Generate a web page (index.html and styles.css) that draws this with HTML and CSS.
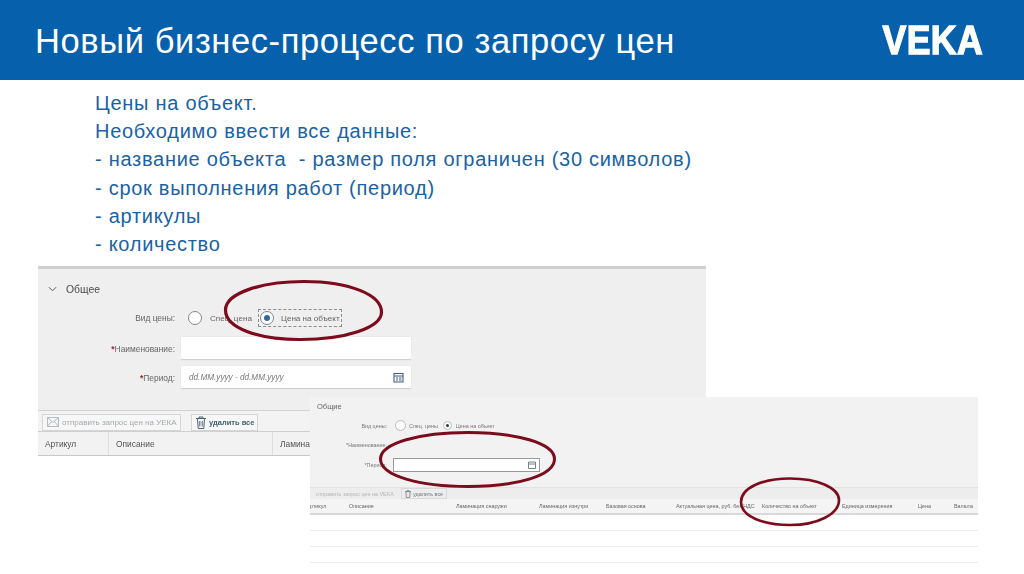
FILE: index.html
```html
<!DOCTYPE html>
<html lang="ru">
<head>
<meta charset="utf-8">
<title>Новый бизнес-процесс по запросу цен</title>
<link rel="stylesheet" href="styles.css">
</head>
<body>
<header class="topbar">
  <h1 class="title">Новый бизнес-процесс по запросу цен</h1>
  <div class="logo">VEKA</div>
</header>
<main class="slide">
  <div class="intro">
    <p>Цены на объект.</p>
    <p>Необходимо ввести все данные:</p>
    <p>- название объекта&nbsp; - размер поля ограничен (30 символов)</p>
    <p>- срок выполнения работ (период)</p>
    <p>- артикулы</p>
    <p>- количество</p>
  </div>

  <section class="shot shot-a">
    <div class="sec-head">
      <svg class="chev" width="9" height="6" viewBox="0 0 10 6"><path d="M1 1l4 4 4-4" fill="none" stroke="#4a5a68" stroke-width="1.1"/></svg>
      <span>Общее</span>
    </div>
    <div class="form">
      <div class="row row-radio">
        <label class="lbl">Вид цены:</label>
        <div class="radios">
          <span class="radio"></span><span class="opt">Спец. цена</span>
          <span class="focus"><span class="radio on"></span><span class="opt">Цена на объект</span></span>
        </div>
      </div>
      <div class="row">
        <label class="lbl"><b>*</b>Наименование:</label>
        <div class="input"></div>
      </div>
      <div class="row">
        <label class="lbl"><b>*</b>Период:</label>
        <div class="input date">
          <i>dd.MM.yyyy - dd.MM.yyyy</i>
          <svg width="11" height="11" viewBox="0 0 11 11"><path d="M1 1.500h9v8.500H1zM1 4h9M3 6h2M6 6h2.500M3 8h2M6 8h2.500" fill="none" stroke="#3f5f80" stroke-width="1.100"/></svg>
        </div>
      </div>
    </div>
    <div class="toolbar">
      <span class="btn off">
        <svg width="12" height="10" viewBox="0 0 12 10"><path d="M.5.5h11v9H.5zM.5.5L6 5.500 11.500.5M.5 9.500L4.500 4.500M11.500 9.500L7.500 4.500" fill="none" stroke="#a9b4bc" stroke-width=".9"/></svg>
        <span>отправить запрос цен на УЕКА</span>
      </span>
      <span class="btn del">
        <svg width="10" height="13" viewBox="0 0 10 13"><path d="M0 2.500h10M3 2.500V1h4v1.500M1.500 2.500l.7 10h5.600l.7-10M3.800 5v5.500M6.200 5v5.500" fill="none" stroke="#4a6378" stroke-width="1"/></svg>
        <span>удалить все</span>
      </span>
    </div>
    <div class="thead">
      <span class="th th-art">Артикул</span>
      <span class="th th-desc">Описание</span>
      <span class="th">Ламина</span>
    </div>
    <div class="tbody"></div>
  </section>

  <section class="shot shot-b">
    <div class="b-head">Общие</div>
    <div class="b-row b-row-radio">
      <span class="b-lbl">Вид цены:</span>
      <span class="b-radio"></span><span class="b-opt">Спец. цены</span>
      <span class="b-radio on"></span><span class="b-opt">Цена на объект</span>
    </div>
    <div class="b-row"><span class="b-lbl">*Наименование:</span></div>
    <div class="b-row">
      <span class="b-lbl">*Период:</span>
      <div class="b-input">
        <svg width="8" height="8" viewBox="0 0 8 8"><path d="M.5 1h7v6.500h-7zM.5 3h7" fill="none" stroke="#77808a"/></svg>
      </div>
    </div>
    <div class="b-toolbar">
      <span class="b-btn off">отправить запрос цен на VEKA</span>
      <span class="b-btn">
        <svg width="6" height="8" viewBox="0 0 10 13"><path d="M0 2.500h10M3 2.500V1h4v1.500M1.500 2.500l.7 10h5.600l.7-10" fill="none" stroke="#6d7680" stroke-width="1.300"/></svg>
        удалить все
      </span>
    </div>
    <div class="b-thead">
      <span>ртикул</span>
      <span>Описание</span>
      <span>Ламинация снаружи</span>
      <span>Ламинация изнутри</span>
      <span>Базовая основа</span>
      <span>Актуальная цена, руб. без НДС</span>
      <span>Количество на объект</span>
      <span>Единица измерения</span>
      <span>Цена</span>
      <span>Валюта</span>
    </div>
    <div class="b-tr"></div>
    <div class="b-tr"></div>
    <div class="b-tr"></div>
  </section>

  <svg class="marks" width="1024" height="574" viewBox="0 0 1024 574">
    <g fill="none" stroke="#7c0c1c" stroke-linecap="round">
      <path stroke-width="3.200" d="M225.500 310C225.500 293 262 281.500 304 281.500C350 281.500 381.500 295 381.500 312C381.500 328 345 339.500 300 339.500C258 339.500 225.500 328 225.500 310Z"/>
      <path stroke-width="3" d="M380.500 459C380.500 443 420 432.500 468 432.500C516 432.500 554.500 443 554.500 459C554.500 476 516 486.500 468 486.500C420 486.500 380.500 476 380.500 459Z"/>
      <path stroke-width="2.600" d="M741 502C741 488 762 478.500 790 478.500C818 478.500 839 488 839 500C839 514 818 525 790 525C762 525 741 516 741 502Z"/>
    </g>
  </svg>
</main>
</body>
</html>
```
FILE: styles.css
```css
* { box-sizing: border-box; }
html, body { margin: 0; padding: 0; }
body {
  width: 1024px;
  height: 574px;
  overflow: hidden;
  background: #fff;
  font-family: "Liberation Sans", Arial, sans-serif;
  color: #3a3a3a;
}
.topbar {
  height: 80px;
  background: #0660ab;
  display: flex;
  align-items: center;
  justify-content: space-between;
  padding: 2px 41px 0 35px;
}
.title {
  margin: 0;
  font-size: 34.500px;
  font-weight: 400;
  letter-spacing: .6px;
  color: #fff;
  white-space: nowrap;
}
.logo {
  font-size: 40px;
  line-height: 40px;
  font-weight: 700;
  letter-spacing: .5px;
  color: #fff;
  -webkit-text-stroke: 1.400px #fff;
  transform: scaleX(.89);
  transform-origin: right center;
  margin-top: -2px;
}
.slide { position: relative; height: 494px; }
.intro {
  padding: 9px 0 0 95px;
  font-size: 20px;
  line-height: 28.200px;
  letter-spacing: .72px;
  color: #1a62a4;
}
.intro p { margin: 0; white-space: nowrap; }

.shot { position: absolute; overflow: hidden; }
.shot-a {
  left: 38px; top: 186px; width: 668px; height: 214px;
  background: #efefef;
  border-top: 3px solid #cfcfcf;
  color: #666;
  font-size: 8.400px;
  filter: blur(.45px);
}
.sec-head {
  display: flex; align-items: center; gap: 9px;
  height: 40px; padding: 0 0 0 10px;
  font-size: 10.400px; color: #4c4c4c;
}
.form { display: flex; flex-direction: column; }
.row {
  display: grid; grid-template-columns: 137px 230px; column-gap: 6px;
  align-items: center; height: 23px; margin-bottom: 6px;
}
.row-radio { margin-bottom: 10px; height: 18px; }
.lbl { text-align: right; color: #666; }
.lbl b { color: #a02020; }
.radios { display: flex; align-items: center; gap: 0; }
.radio {
  display: block; flex: none; width: 14px; height: 14px;
  margin-left: 7px; border: 1px solid #888; border-radius: 50%; background: #fff;
}
.radio.on { position: relative; border-color: #7a8794; margin-left: 1px; }
.radio.on::after {
  content: ""; position: absolute; left: 3px; top: 3px;
  width: 6px; height: 6px; border-radius: 50%; background: #33699f;
}
.opt { margin-left: 8px; white-space: nowrap; font-size: 8.100px; }
.focus {
  display: flex; align-items: center; height: 18px; width: 84px; margin-left: 6px;
  border: 1px dashed #8e8e8e;
}
.focus .opt { margin-left: 7px; }
.input {
  height: 23px; background: #fff;
  border-bottom: 1px solid #cfcfcf;
  box-shadow: 0 0 1px #ddd;
}
.date {
  display: flex; align-items: center; justify-content: space-between;
  padding: 0 7px 0 8px; color: #777; font-size: 8.200px;
}
.toolbar {
  display: flex; align-items: center; gap: 10px;
  height: 21px; margin-top: 15px; padding: 2px 0 0 4px;
  border-top: 1px solid #d2d2d2;
  background: #f3f3f3;
}
.btn {
  display: flex; align-items: center; gap: 3px; height: 17px; padding: 0 4px;
  border: 1px solid #d5d5d5; background: #f7f7f7; white-space: nowrap;
  font-size: 8px;
}
.btn svg { flex: none; }
.btn.off { width: 139px; color: #a3a9ae; }
.btn.del { width: 67px; color: #3f5f78; font-weight: 700; font-size: 7.500px; }
.thead {
  display: flex; align-items: center; height: 25px;
  background: #f2f2f2;
  border-top: 1px solid #cfcfcf;
  border-bottom: 1px solid #c8c8c8;
  color: #555;
}
.th { height: 100%; display: flex; align-items: center; padding-left: 7px; white-space: nowrap; }
.th-art { width: 71px; border-right: 1px solid #dcdcdc; }
.th-desc { width: 164px; border-right: 1px solid #dcdcdc; }
.tbody { height: 40px; background: #fff; }

.shot-b {
  left: 310px; top: 317px; width: 668px; height: 166px;
  background: #f2f2f2;
  color: #777;
  font-size: 5.400px;
  filter: blur(.6px);
}
.b-head { height: 19px; padding: 5px 0 0 7px; font-size: 7.500px; color: #666; }
.b-row { display: flex; align-items: center; height: 20px; }
.b-row-radio { height: 19px; }
.b-lbl { width: 77px; text-align: right; white-space: nowrap; }
.b-radio {
  flex: none; width: 11px; height: 11px; margin-left: 8px;
  border: 1px solid #bbb; border-radius: 50%; background: #fff; position: relative;
}
.b-radio.on { margin-left: 3px; width: 9px; height: 9px; }
.b-radio.on::after {
  content: ""; position: absolute; left: 2px; top: 2px;
  width: 3px; height: 3px; border-radius: 50%; background: #334;
}
.b-opt { margin-left: 3px; margin-right: 2px; white-space: nowrap; }
.b-radio.on + .b-opt { margin-left: 4px; }
.b-input {
  width: 147px; height: 14px; margin-left: 6px; background: #fff;
  border: 1px solid #9a9a9a;
  display: flex; align-items: center; justify-content: flex-end; padding-right: 3px;
}
.b-toolbar {
  display: flex; align-items: center; gap: 5px; height: 12px; margin-top: 12px; padding-left: 2px;
  background: #ededed; border-top: 1px solid #e2e2e2;
}
.b-btn {
  display: flex; align-items: center; gap: 2px;
  border: 1px solid #d9d9d9; height: 11px; padding: 0 3px;
  color: #6d7680; white-space: nowrap;
}
.b-btn.off { color: #b5b5b5; width: 84px; border-color: transparent; }
.b-thead {
  display: grid;
  grid-template-columns: 39px 107px 83px 67px 70px 86px 80px 76px 36px 24px;
  align-items: center; height: 16px;
  background: #f4f4f4;
  border-bottom: 2px solid #d8d8d8;
  color: #666;
  white-space: nowrap;
}
.b-tr { height: 16px; background: #fff; border-bottom: 1px solid #ececec; }

.marks { position: absolute; left: 0; top: -80px; pointer-events: none; }
```
